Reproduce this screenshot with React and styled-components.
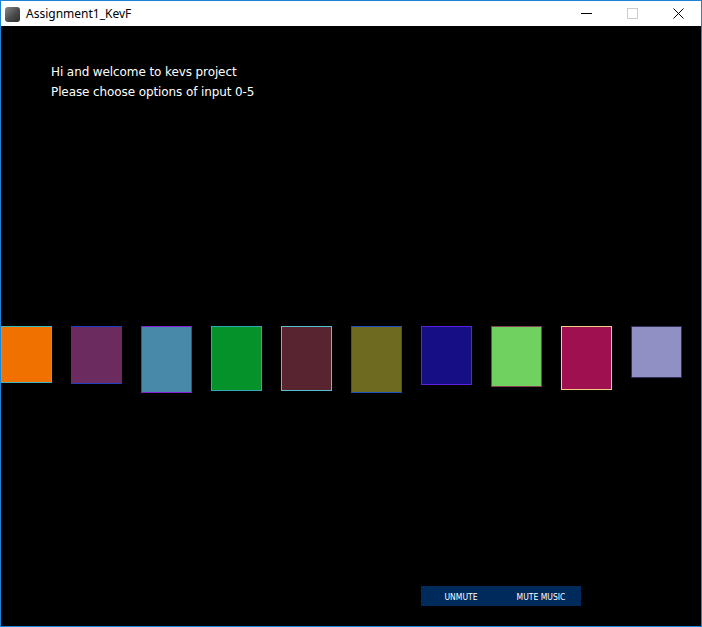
import React from "react";
import styled, { createGlobalStyle } from "styled-components";

const GlobalStyle = createGlobalStyle`
  html, body {
    margin: 0;
    padding: 0;
    background: #000;
  }
  * {
    box-sizing: border-box;
  }
`;

const Frame = styled.div`
  width: 702px;
  height: 627px;
  border: 1px solid #1a84d8;
  display: flex;
  flex-direction: column;
  background: #000;
  overflow: hidden;
`;

const TitleBar = styled.div`
  height: 25px;
  flex: 0 0 25px;
  background: #fff;
  display: flex;
  align-items: center;
`;

const AppIcon = styled.div`
  width: 15px;
  height: 15px;
  margin-left: 4px;
  margin-top: 1px;
  border-radius: 3px;
  background: linear-gradient(135deg, #8a8a8a 0%, #4a4a4a 55%, #2e2e2e 100%);
`;

const Title = styled.span`
  margin-left: 6px;
  font-family: "Noto Sans", "Open Sans", sans-serif;
  font-size: 12px;
  color: #000;
  flex: 1;
`;

const Ctrl = styled.div`
  width: 46px;
  height: 25px;
  display: flex;
  align-items: center;
  justify-content: center;
`;

const Content = styled.div`
  flex: 1;
  display: flex;
  flex-direction: column;
  padding-top: 36px;
  padding-bottom: 20px;
`;

const Greeting = styled.div`
  padding-left: 50px;
  font-family: "DejaVu Sans", sans-serif;
  font-size: 12px;
  line-height: 20px;
  color: #fff;
  letter-spacing: -0.1px;
`;

const Row = styled.div`
  display: flex;
  align-items: flex-start;
  gap: 19px;
  margin-top: 224px;
`;

const Square = styled.div`
  width: 51px;
  height: ${(p) => p.$h}px;
  background: ${(p) => p.$bg};
  border: 1px solid ${(p) => p.$edge};
  flex: 0 0 51px;
`;

const SoundBar = styled.div`
  margin-top: auto;
  margin-left: 420px;
  width: 160px;
  height: 20px;
  background: #002a5c;
  display: flex;
`;

const SoundButton = styled.div`
  width: 80px;
  display: flex;
  align-items: center;
  justify-content: center;
  font-family: "DejaVu Sans Condensed", "DejaVu Sans", sans-serif;
  font-size: 8.5px;
  font-weight: normal;
  color: #fff;
  padding-top: 1px;
`;

const squares = [
  { bg: "#f07000", edge: "#3cb8c0", h: 57 },
  { bg: "#6b2b5e", edge: "#2040c0", h: 58 },
  { bg: "#4888a8", edge: "#8020d0", h: 67 },
  { bg: "#06922a", edge: "#30a8b8", h: 65 },
  { bg: "#582430", edge: "#58c0d0", h: 65 },
  { bg: "#6e6a20", edge: "#2050c0", h: 67 },
  { bg: "#160e84", edge: "#6020e0", h: 59 },
  { bg: "#70d060", edge: "#804050", h: 61 },
  { bg: "#9e1050", edge: "#f0d080", h: 64 },
  { bg: "#9090c4", edge: "#303058", h: 52 },
];

export default function App() {
  return (
    <>
      <GlobalStyle />
      <Frame>
        <TitleBar>
          <AppIcon />
          <Title>Assignment1_KevF</Title>
          <Ctrl>
            <svg width="11" height="11" viewBox="0 0 11 11">
              <line x1="0" y1="5.5" x2="11" y2="5.5" stroke="#000" strokeWidth="1" />
            </svg>
          </Ctrl>
          <Ctrl>
            <svg width="11" height="11" viewBox="0 0 11 11">
              <rect x="0.5" y="0.5" width="10" height="10" fill="none" stroke="#cccccc" strokeWidth="1" />
            </svg>
          </Ctrl>
          <Ctrl>
            <svg width="11" height="11" viewBox="0 0 11 11">
              <path d="M0.5 0.5 L10.5 10.5 M10.5 0.5 L0.5 10.5" stroke="#000" strokeWidth="1" />
            </svg>
          </Ctrl>
        </TitleBar>
        <Content>
          <Greeting>
            <div>Hi and welcome to kevs project</div>
            <div>Please choose options of input 0-5</div>
          </Greeting>
          <Row>
            {squares.map((s, i) => (
              <Square key={i} $bg={s.bg} $edge={s.edge} $h={s.h} />
            ))}
          </Row>
          <SoundBar>
            <SoundButton>UNMUTE</SoundButton>
            <SoundButton>MUTE MUSIC</SoundButton>
          </SoundBar>
        </Content>
      </Frame>
    </>
  );
}
